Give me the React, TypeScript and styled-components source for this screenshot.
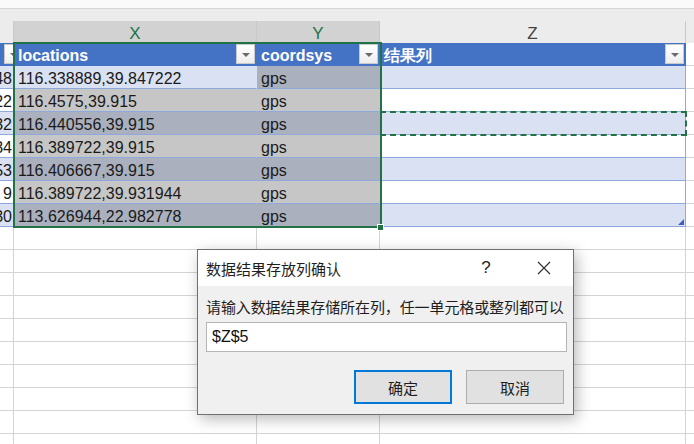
import React from 'react';
import styled, { createGlobalStyle } from 'styled-components';

const GlobalStyle = createGlobalStyle`
  * { box-sizing: border-box; }
  html, body { margin: 0; padding: 0; background: #fff; overflow: hidden; }
  body { font-family: "Liberation Sans", Arial, sans-serif; }
`;

const COLS = '14px 243px 123px 306px 1fr';
const GRID = '#d4d4d4';
const BAND_LINE = '#8ea9db';
const GREEN = '#217346';

const Page = styled.div`
  position: relative;
  width: 694px;
  height: 444px;
  overflow: hidden;
  background: #fff;
`;

const TopBar = styled.div`
  height: 9px;
  background: #fafafa;
  border-bottom: 1px solid #d6d6d6;
`;

const Strip = styled.div`
  height: 12px;
  background: #ececec;
`;

const Row = styled.div<{ $h?: number }>`
  display: grid;
  grid-template-columns: ${COLS};
  height: ${p => p.$h ?? 23}px;
`;

const ColHead = styled.div<{ $sel?: boolean }>`
  display: flex;
  align-items: center;
  justify-content: center;
  background: ${p => (p.$sel ? '#d2d2d2' : '#ececec')};
  border-right: 1px solid #c8c8c8;
  color: ${p => (p.$sel ? GREEN : '#444')};
  font-size: 17px;
  padding-top: 3px;
  &:last-child { border-right: none; }
`;

const Cell = styled.div<{ $bg?: string; $line?: string; $right?: string; $align?: 'left' | 'right' }>`
  position: relative;
  display: flex;
  align-items: flex-end;
  justify-content: ${p => (p.$align === 'right' ? 'flex-end' : 'flex-start')};
  background: ${p => p.$bg ?? '#fff'};
  border-bottom: 1px solid ${p => p.$line ?? GRID};
  border-right: 1px solid ${p => p.$right ?? GRID};
  padding: 0 4px 0 4px;
  font-size: 16px;
  line-height: 18px;
  color: #1a1a1a;
  white-space: nowrap;
  overflow: hidden;
`;

const HeadCell = styled.div<{ $edge?: boolean }>`
  display: flex;
  align-items: center;
  justify-content: space-between;
  background: #4472c4;
  color: #fff;
  font-weight: bold;
  font-size: 16px;
  padding: 4px ${p => (p.$edge ? '0' : '2px')} 0 4px;
  border-bottom: 1px solid #4472c4;
  overflow: hidden;
  white-space: nowrap;
`;

const HeadRight = styled.div`
  background: #fff;
  border-bottom: 1px solid ${GRID};
`;

const DropBtn = styled.div`
  flex: none;
  width: 19px;
  height: 20px;
  margin-top: -4px;
  background: linear-gradient(#ffffff, #eeeeee);
  border: 1px solid #c9c9c9;
  display: flex;
  align-items: center;
  justify-content: center;
  &::after {
    content: '';
    border-left: 4px solid transparent;
    border-right: 4px solid transparent;
    border-top: 4px solid #6a6a6a;
    margin-top: 2px;
  }
`;

const Selection = styled.div`
  position: absolute;
  left: 13px;
  top: 42px;
  width: 369px;
  height: 186px;
  border: 2px solid ${GREEN};
  pointer-events: none;
`;

const FillHandle = styled.div`
  position: absolute;
  left: 377px;
  top: 224px;
  width: 7px;
  height: 7px;
  background: ${GREEN};
  border: 1px solid #fff;
`;

const Marquee = styled.div`
  position: absolute;
  left: 380px;
  top: 111px;
  width: 307px;
  height: 25px;
  border: 2px dashed ${GREEN};
`;

const ResizeMark = styled.div`
  position: absolute;
  right: 1px;
  bottom: 1px;
  width: 0;
  height: 0;
  border-left: 6px solid transparent;
  border-bottom: 6px solid #3f5fbf;
`;

const Dialog = styled.div`
  position: absolute;
  left: 197px;
  top: 249px;
  width: 377px;
  height: 166px;
  border: 1px solid #707070;
  background: #f0f0f0;
  box-shadow: 3px 4px 14px rgba(0, 0, 0, 0.28);
  display: flex;
  flex-direction: column;
  font-family: "Noto Sans CJK SC", "Liberation Sans", sans-serif;
  color: #1e1e1e;
`;

const TitleBar = styled.div`
  height: 36px;
  background: #fff;
  display: flex;
  align-items: center;
  padding-left: 8px;
  font-size: 15px;
`;

const Title = styled.div`
  flex: 1;
`;

const TitleBtn = styled.div`
  width: 58px;
  height: 36px;
  display: flex;
  align-items: center;
  justify-content: center;
  font-family: "Liberation Sans", sans-serif;
  font-size: 17px;
  color: #222;
`;

const Body = styled.div`
  flex: 1;
  display: flex;
  flex-direction: column;
  padding: 9px 6px 10px 8px;
`;

const Label = styled.div`
  font-size: 15px;
  line-height: 24px;
  white-space: nowrap;
  letter-spacing: -0.1px;
`;

const Input = styled.div`
  margin-top: 3px;
  height: 30px;
  width: 361px;
  background: #fff;
  border: 1px solid #b5b5b5;
  display: flex;
  align-items: center;
  padding-left: 5px;
  font-family: "Liberation Sans", sans-serif;
  font-size: 16px;
  color: #111;
`;

const Buttons = styled.div`
  margin-top: auto;
  display: flex;
  justify-content: flex-end;
  gap: 14px;
  padding-right: 3px;
`;

const Button = styled.div<{ $primary?: boolean }>`
  width: 98px;
  height: 34px;
  background: #e1e1e1;
  border: ${p => (p.$primary ? '2px solid #0078d7' : '1px solid #adadad')};
  display: flex;
  align-items: center;
  justify-content: center;
  font-size: 15px;
`;

const BLUE = '#d9e1f2';
const SEL_BLUE = '#aab0bd';
const SEL_WHITE = '#c6c6c6';

const rows = [
  { w: '1248', loc: '116.338889,39.847222' },
  { w: '3522', loc: '116.4575,39.915' },
  { w: '7832', loc: '116.440556,39.915' },
  { w: '2334', loc: '116.389722,39.915' },
  { w: '6653', loc: '116.406667,39.915' },
  { w: '1  9', loc: '116.389722,39.931944' },
  { w: '4830', loc: '113.626944,22.982778' },
];

const CloseIcon = () => (
  <svg width="14" height="14" viewBox="0 0 14 14">
    <path d="M1 1 L13 13 M13 1 L1 13" stroke="#333" strokeWidth="1.2" fill="none" />
  </svg>
);

export default function App() {
  return (
    <Page>
      <GlobalStyle />
      <TopBar />
      <Strip />
      <Row $h={22}>
        <ColHead />
        <ColHead $sel>X</ColHead>
        <ColHead $sel>Y</ColHead>
        <ColHead>Z</ColHead>
        <ColHead />
      </Row>
      <Row>
        <HeadCell $edge>
          <span />
          <DropBtn />
        </HeadCell>
        <HeadCell>
          locations
          <DropBtn />
        </HeadCell>
        <HeadCell>
          coordsys
          <DropBtn />
        </HeadCell>
        <HeadCell>
          结果列
          <DropBtn />
        </HeadCell>
        <HeadRight />
      </Row>
      {rows.map((r, i) => {
        const band = i % 2 === 0;
        const base = band ? BLUE : '#fff';
        const sel = band ? SEL_BLUE : SEL_WHITE;
        return (
          <Row key={i}>
            <Cell $bg={base} $line={BAND_LINE} $right={base} $align="right" style={{ paddingRight: 1 }}>
              {r.w}
            </Cell>
            <Cell $bg={i === 0 ? BLUE : sel} $line={BAND_LINE} $right={i === 0 ? BLUE : sel}>
              {r.loc}
            </Cell>
            <Cell $bg={sel} $line={BAND_LINE} $right={sel}>
              gps
            </Cell>
            <Cell $bg={base} $line={BAND_LINE} $right={BAND_LINE}>
              {i === rows.length - 1 && <ResizeMark />}
            </Cell>
            <Cell />
          </Row>
        );
      })}
      {Array.from({ length: 10 }).map((_, i) => (
        <Row key={`e${i}`}>
          <Cell />
          <Cell />
          <Cell />
          <Cell />
          <Cell />
        </Row>
      ))}
      <Selection />
      <FillHandle />
      <Marquee />
      <Dialog>
        <TitleBar>
          <Title>数据结果存放列确认</Title>
          <TitleBtn>?</TitleBtn>
          <TitleBtn>
            <CloseIcon />
          </TitleBtn>
        </TitleBar>
        <Body>
          <Label>请输入数据结果存储所在列，任一单元格或整列都可以</Label>
          <Input>$Z$5</Input>
          <Buttons>
            <Button $primary>确定</Button>
            <Button>取消</Button>
          </Buttons>
        </Body>
      </Dialog>
    </Page>
  );
}
